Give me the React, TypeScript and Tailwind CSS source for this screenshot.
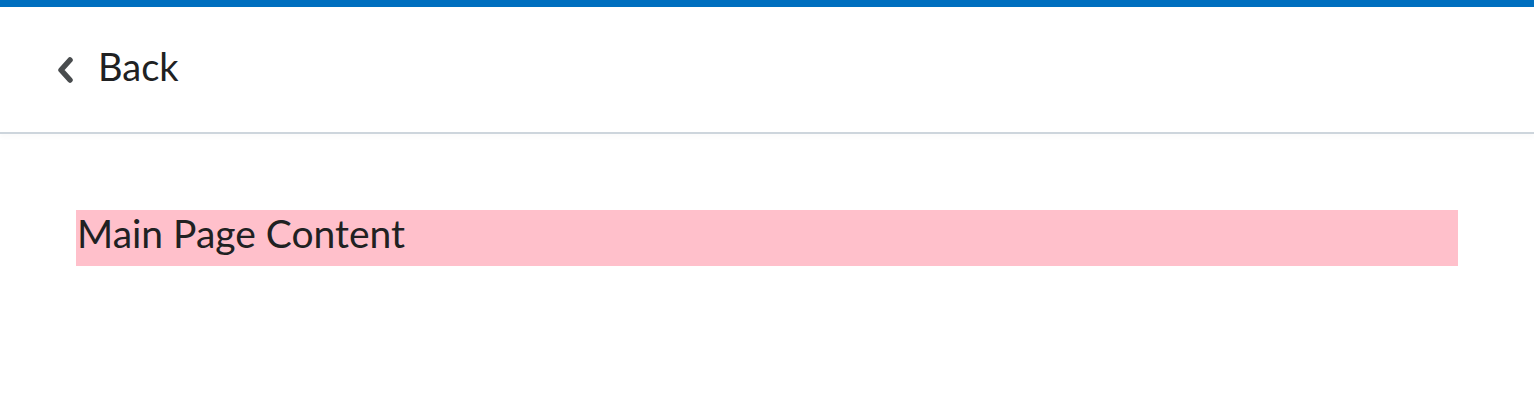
export default function App() {
  return (
    <div className="min-h-[400px] bg-white font-['Lato','Liberation_Sans',sans-serif] text-[#202122]">
      <div className="h-[7px] bg-[#006fbf]" />
      <header className="flex h-[127px] items-start border-b-2 border-[#cdd5dc] pl-[57px] pt-[40px] shadow-[0_4px_4px_rgba(0,0,0,0.02)]">
        <button type="button" className="flex items-start gap-[24px]">
          <svg className="mt-[10px]" width="17" height="26" viewBox="0 0 17 26" fill="none">
            <path
              d="M13 3 L4 13 L13 23"
              stroke="#494c4e"
              strokeWidth="5.5"
              strokeLinecap="round"
              strokeLinejoin="round"
            />
          </svg>
          <span className="text-[38px] leading-none">Back</span>
        </button>
      </header>
      <main className="px-[76px] pt-[76px]">
        <div className="h-[56px] bg-[#ffc0cb] pl-px text-[39px] leading-[47px]">
          Main Page Content
        </div>
      </main>
    </div>
  );
}
